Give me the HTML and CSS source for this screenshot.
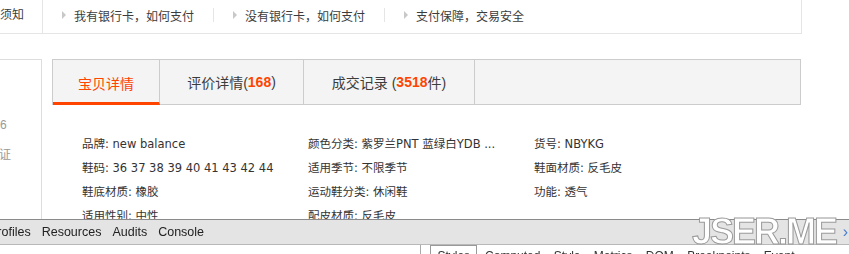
FILE: index.html
```html
<!DOCTYPE html>
<html lang="zh-CN">
<head>
  <meta charset="UTF-8" />
  <title>宝贝详情</title>
  <link rel="stylesheet" href="styles.css">
</head>
<body>

  <div class="pay-bar">
    <div class="pay-head">须知</div>
    <div class="pay-item"><span class="arrow"></span>我有银行卡，如何支付</div>
    <div class="pay-item"><span class="arrow"></span>没有银行卡，如何支付</div>
    <div class="pay-item last"><span class="arrow"></span>支付保障，交易安全</div>
  </div>

  <div class="main">
    <div class="side">
      <p class="side-num">6</p>
      <p class="side-tag">证</p>
    </div>

    <div class="detail">
      <ul class="tabs">
        <li class="tab tab-1 active">宝贝详情</li>
        <li class="tab tab-2">评价详情(<b>168</b>)</li>
        <li class="tab tab-3">成交记录 (<b>3518</b>件)</li>
      </ul>

      <ul class="attrs">
        <li>品牌: new balance</li>
        <li>颜色分类: 紫罗兰PNT 蓝绿白YDB ...</li>
        <li>货号: NBYKG</li>
        <li>鞋码: 36 37 38 39 40 41 43 42 44</li>
        <li>适用季节: 不限季节</li>
        <li>鞋面材质: 反毛皮</li>
        <li>鞋底材质: 橡胶</li>
        <li>运动鞋分类: 休闲鞋</li>
        <li>功能: 透气</li>
        <li>适用性别: 中性</li>
        <li>配皮材质: 反毛皮</li>
      </ul>
    </div>
  </div>

  <!-- devtools panel docked over the page -->
  <div class="devtools">
    <div class="dev-toolbar">
      <span class="dev-tab first">Profiles</span>
      <span class="dev-tab">Resources</span>
      <span class="dev-tab">Audits</span>
      <span class="dev-tab">Console</span>
    </div>
    <div class="dev-body">
      <div class="dev-left"></div>
      <div class="dev-right">
        <span class="dev-box">Styles</span>
        <span class="dev-text">Computed Style Metrics DOM Breakpoints Event Listeners</span>
      </div>
    </div>
    <div class="watermark">JSER.ME</div>
    <span class="dev-more">&rsaquo;</span>
  </div>

</body>
</html>
```

FILE: styles.css
```css
html, body {
margin: 0;
padding: 0;
}

body {
width: 849px;
height: 254px;
overflow: hidden;
background: #fff;
font-family: "Liberation Sans", "Noto Sans CJK SC", sans-serif;
font-size: 12px;
color: #333;
}

ul, p {
margin: 0;
padding: 0;
list-style: none;
}

/* pay help bar */
.pay-bar {
display: flex;
width: 801px;
height: 33px;
border-right: 1px solid #e5e5e5;
border-bottom: 1px solid #e5e5e5;
color: #3c3c3c;
}

.pay-head {
width: 42px;
line-height: 30px;
border-right: 1px solid #e5e5e5;
}

.pay-item {
position: relative;
display: flex;
align-items: center;
width: 171px;
height: 30px;
padding-left: 19px;
box-sizing: border-box;
}

.pay-item::after {
content: "";
position: absolute;
right: 0;
top: 8px;
height: 14px;
border-right: 1px solid #e5e5e5;
}

.pay-item.last::after {
display: none;
}

.arrow {
width: 0;
height: 0;
border-top: 4px solid transparent;
border-bottom: 4px solid transparent;
border-left: 4px solid #c8c8c8;
margin-right: 8px;
}

/* main */
.main {
display: flex;
margin-top: 25px;
}

.side {
width: 41px;
height: 170px;
border-top: 1px solid #ddd;
border-right: 1px solid #ddd;
color: #999;
font-size: 12px;
}

.side-num {
margin-top: 58px;
}

.side-tag {
margin-top: 13px;
margin-left: -1px;
}

.detail {
margin-left: 10px;
}

.tabs {
display: flex;
width: 747px;
height: 44px;
border: 1px solid #ccc;
background: #f4f4f4;
}

.tab {
display: flex;
align-items: center;
justify-content: center;
height: 44px;
border-right: 1px solid #ccc;
box-sizing: border-box;
font-size: 14px;
color: #3c3c3c;
}

.tab b {
color: #f40;
}

.tab-1 {
width: 107px;
}

.tab-2 {
width: 144px;
}

.tab-3 {
width: 171px;
}

.tab.active {
color: #f40;
height: 45px;
border-bottom: 3px solid #f40;
padding-top: 3px;
}

.attrs {
display: grid;
grid-template-columns: 226px 226px 226px;
margin-top: 27px;
padding-left: 30px;
font-family: "DejaVu Sans", "Noto Sans CJK SC", sans-serif;
font-size: 11.5px;
}

.attrs li {
line-height: 24px;
white-space: nowrap;
}

/* devtools */
.devtools {
position: fixed;
left: 0;
right: 0;
top: 219px;
height: 35px;
background: #fff;
border-top: 1px solid #8a8a8a;
font-family: "Liberation Sans", sans-serif;
}

.dev-toolbar {
height: 24px;
background: #e4e4e4;
border-bottom: 1px solid #b8b8b8;
display: flex;
align-items: center;
font-size: 12.5px;
color: #222;
}

.dev-tab {
margin-right: 11px;
}

.dev-tab.first {
margin-left: -11px;
}

.dev-body {
display: flex;
height: 10px;
overflow: hidden;
}

.dev-left {
width: 428px;
border-right: 1px solid #aaa;
}

.dev-right {
display: flex;
align-items: flex-start;
padding-left: 9px;
font-size: 12px;
}

.dev-box {
border: 1px solid #999;
padding: 3px 6px;
margin-right: 8px;
}

.dev-text {
padding-top: 4px;
word-spacing: 10px;
}

.watermark {
position: absolute;
left: 692px;
top: -9px;
font-size: 36px;
font-weight: bold;
letter-spacing: -2px;
color: #fff;
-webkit-text-stroke: 1px #9a9a9a;
}

.dev-more {
position: absolute;
right: 1px;
top: 3px;
font-size: 16px;
color: #4a7fd0;
}
```
